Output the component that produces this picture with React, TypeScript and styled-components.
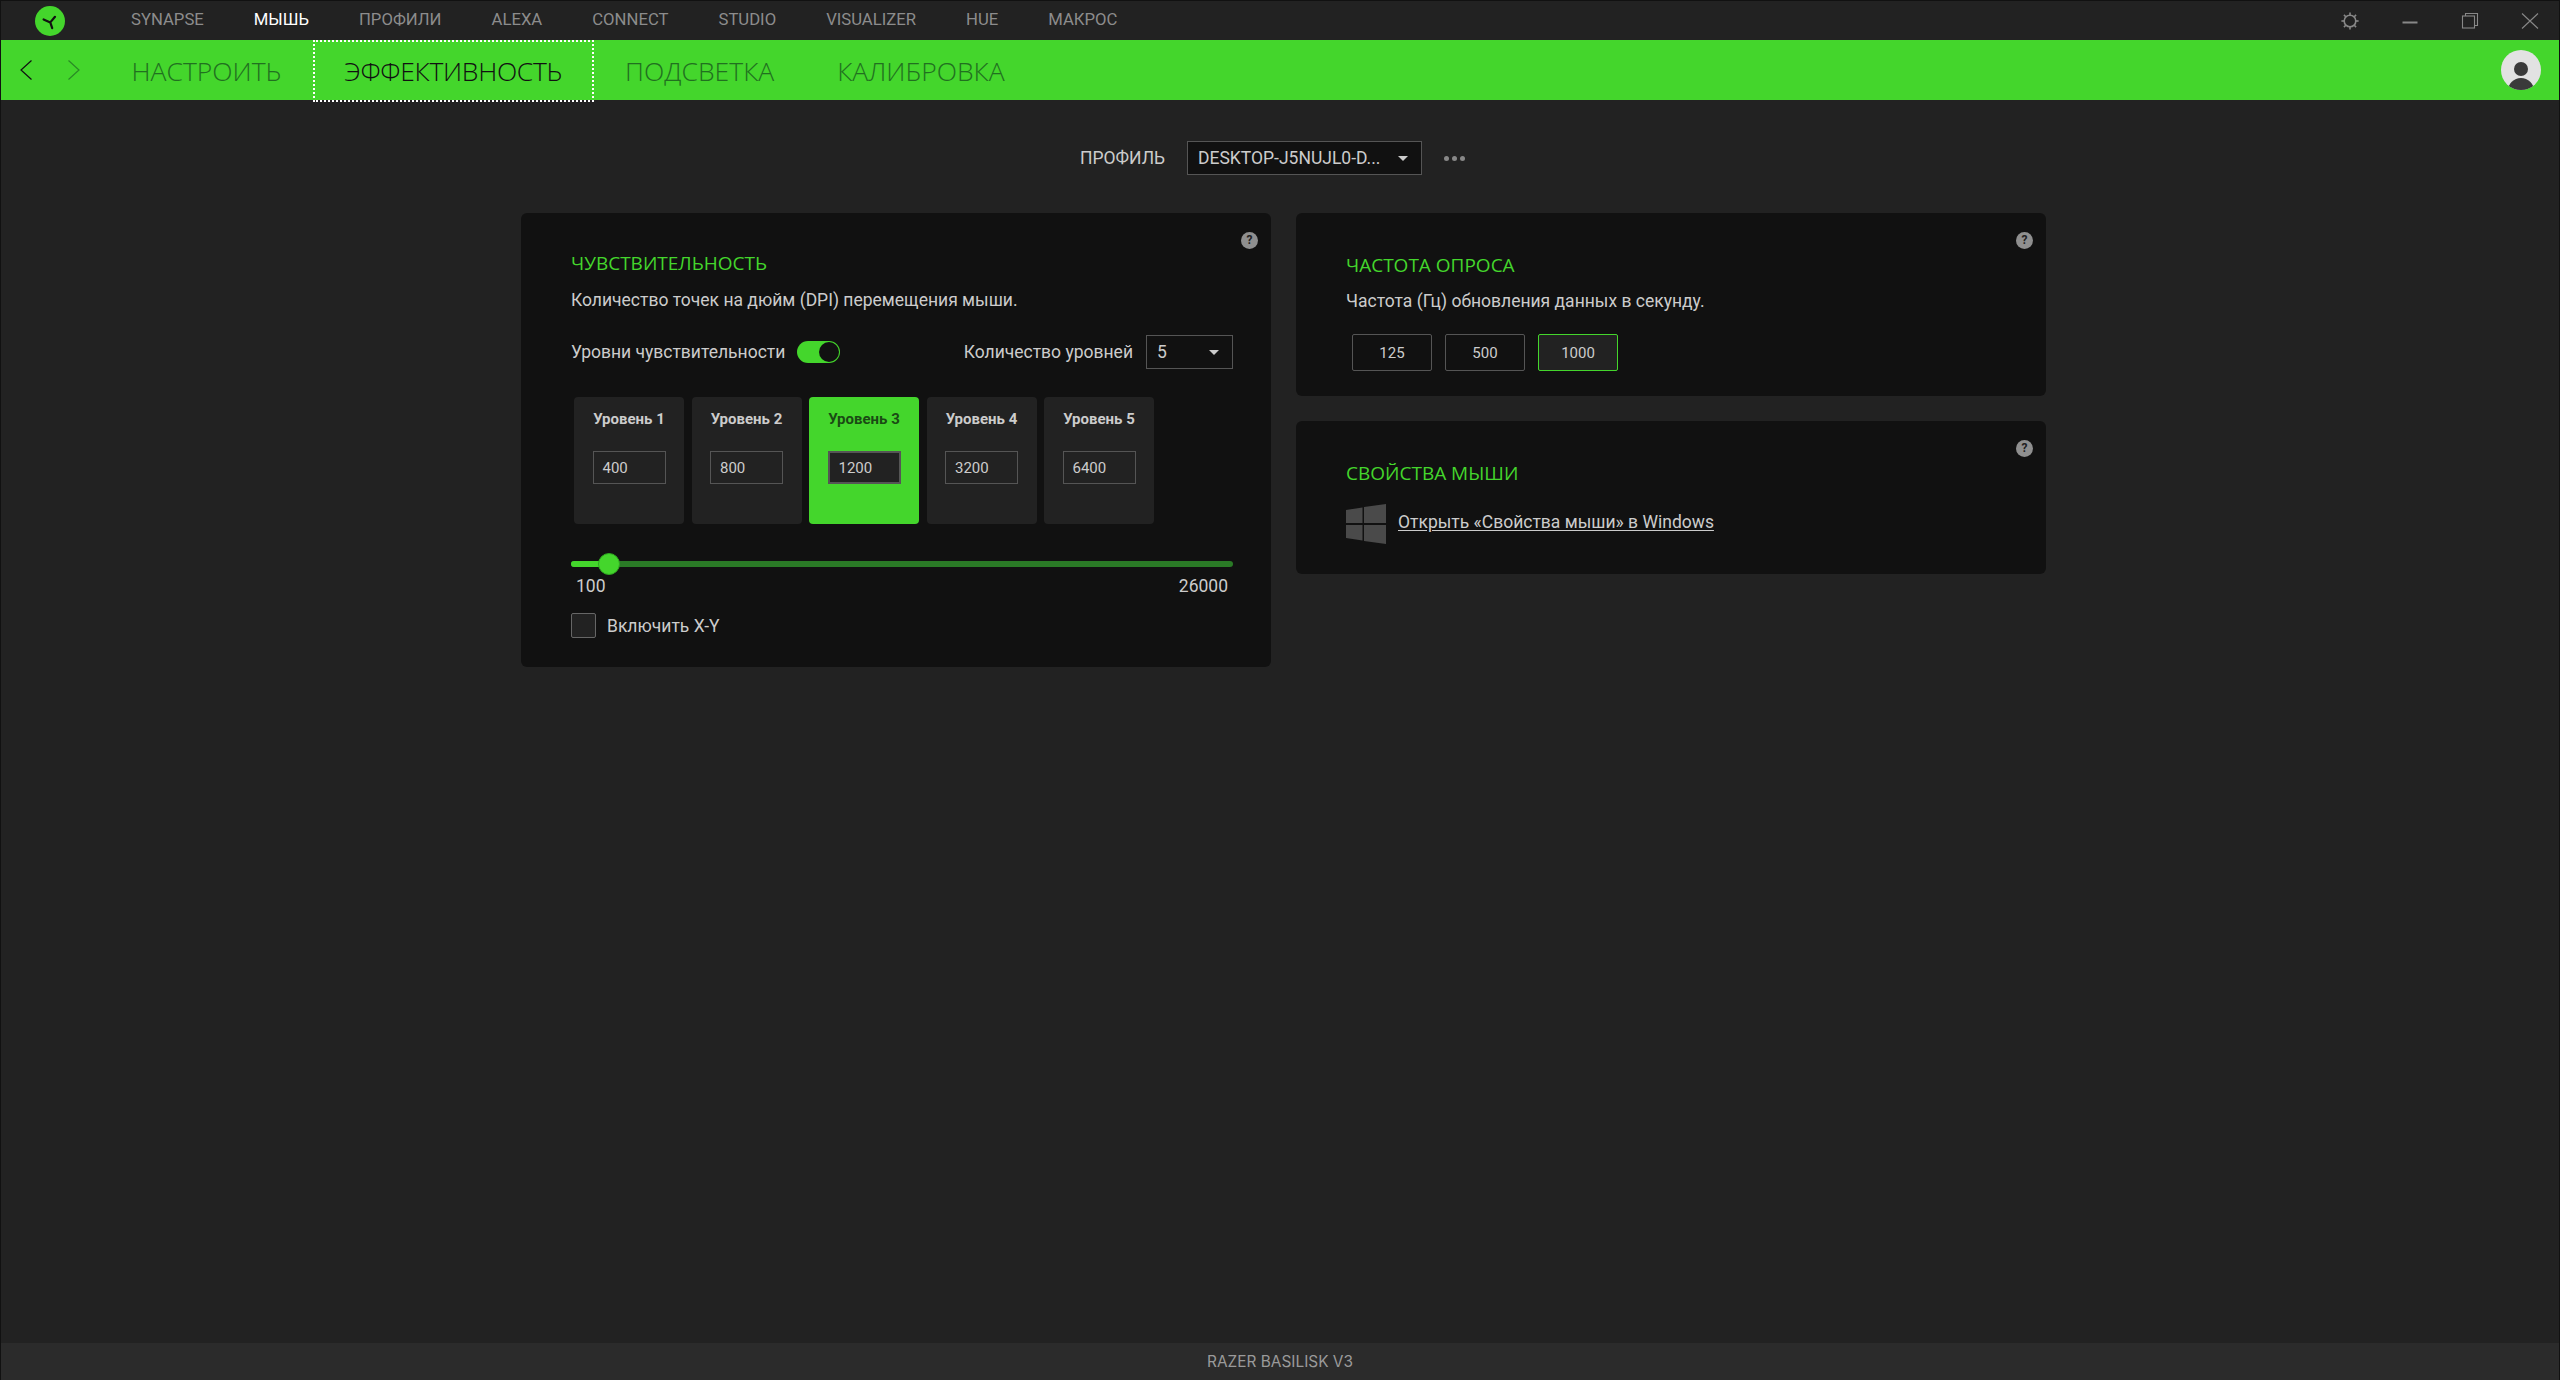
import React from 'react';
import styled, { createGlobalStyle } from 'styled-components';

const GREEN = '#44d62c';

const GlobalStyle = createGlobalStyle`
  html, body {
    margin: 0;
    padding: 0;
    background: #222;
    overflow: hidden;
  }
  * {
    box-sizing: border-box;
  }
`;

const Window = styled.div`
  width: 2560px;
  height: 1380px;
  display: flex;
  flex-direction: column;
  background: #222;
  border: 1px solid #111;
  border-bottom: none;
  font-family: Roboto, "Liberation Sans", sans-serif;
  color: #ccc;
`;

const TopBar = styled.div`
  height: 39px;
  flex: none;
  display: flex;
  align-items: center;
  padding-left: 34px;
`;

const Logo = styled.svg`
  width: 30px;
  height: 30px;
  flex: none;
`;

const TopNav = styled.nav`
  display: flex;
  gap: 50px;
  margin-left: 66px;
  padding-bottom: 1px;
  flex: 1;
`;

const TopNavItem = styled.span<{ $active?: boolean }>`
  font-size: 16.7px;
  line-height: 20px;
  color: ${(p) => (p.$active ? '#fff' : '#8c8c8c')};
`;

const WindowControls = styled.div`
  display: flex;
  align-items: center;
  gap: 40px;
  padding-right: 19px;
`;

const ControlIcon = styled.svg`
  width: 20px;
  height: 20px;
  display: block;
`;

const TabBar = styled.div`
  height: 60px;
  flex: none;
  display: flex;
  align-items: center;
  background: ${GREEN};
  padding-left: 19px;
  padding-right: 18px;
`;

const ChevronGroup = styled.div`
  display: flex;
  gap: 36px;
  margin-right: 20px;
`;

const Chevron = styled.svg`
  width: 12px;
  height: 20px;
  display: block;
`;

const Tabs = styled.div`
  display: flex;
  flex: 1;
  height: 100%;
`;

const Tab = styled.div<{ $active?: boolean }>`
  position: relative;
  display: flex;
  align-items: center;
  padding: 2px 31.5px 0;
  font-family: "Open Sans", "Liberation Sans", sans-serif;
  font-weight: 300;
  font-size: 26.5px;
  letter-spacing: ${(p) => (p.$active ? '-0.3px' : '0')};
  color: ${(p) => (p.$active ? '#111' : '#217020')};

  ${(p) =>
    p.$active &&
    `
    &::after {
      content: '';
      position: absolute;
      inset: 0 0 -2px 0;
      border: 2px dotted #fff;
    }
  `}
`;

const Avatar = styled.svg`
  width: 40px;
  height: 40px;
  display: block;
`;

const Main = styled.main`
  flex: 1;
  padding: 41px 0 0 520px;
`;

const ProfileRow = styled.div`
  display: flex;
  align-items: center;
  height: 34px;
  padding-left: 559px;
`;

const ProfileLabel = styled.span`
  width: 107px;
  font-size: 17.5px;
  color: #ccc;
`;

const Select = styled.div<{ $width: number }>`
  width: ${(p) => p.$width}px;
  height: 34px;
  display: flex;
  align-items: center;
  justify-content: space-between;
  padding: 0 13px 0 10px;
  background: #111;
  border: 1px solid #555;
  font-size: 17.5px;
  color: #ccc;
`;

const Caret = styled.span`
  width: 0;
  height: 0;
  border-left: 5px solid transparent;
  border-right: 5px solid transparent;
  border-top: 5px solid #ccc;
`;

const MoreDots = styled.div`
  display: flex;
  gap: 3px;
  margin-left: 22px;
`;

const Dot = styled.span`
  width: 5px;
  height: 5px;
  border-radius: 50%;
  background: #888;
`;

const Columns = styled.div`
  display: grid;
  grid-template-columns: 750px 750px;
  gap: 25px;
  align-items: start;
  margin-top: 38px;
`;

const Column = styled.div`
  display: flex;
  flex-direction: column;
  gap: 25px;
`;

const Card = styled.section`
  position: relative;
  background: #111;
  border-radius: 6px;
`;

const SensitivityCard = styled(Card)`
  padding: 38px 38px 29px 50px;
`;

const PollingCard = styled(Card)`
  padding: 40px 38px 25px 50px;
`;

const PropertiesCard = styled(Card)`
  padding: 40px 38px 30px 50px;
`;

const HelpBadge = styled.span<{ $top: number }>`
  position: absolute;
  top: ${(p) => p.$top}px;
  right: 13px;
  width: 17px;
  height: 17px;
  border-radius: 50%;
  background: #8f8f8f;
  color: #222;
  font-size: 12px;
  font-weight: 700;
  line-height: 17px;
  text-align: center;
`;

const CardTitle = styled.h2`
  margin: 0;
  font-family: "Open Sans", "Liberation Sans", sans-serif;
  font-weight: 400;
  font-size: 19px;
  line-height: 24px;
  color: ${GREEN};
`;

const Description = styled.p<{ $top: number }>`
  margin: ${(p) => p.$top}px 0 0;
  font-size: 17.5px;
  line-height: 24px;
  color: #ccc;
`;

const ToggleRow = styled.div`
  display: flex;
  align-items: center;
  height: 34px;
  margin-top: 23px;
  font-size: 17.5px;
`;

const Toggle = styled.span`
  position: relative;
  width: 43px;
  height: 22px;
  margin-left: 12px;
  border-radius: 11px;
  background: ${GREEN};
`;

const ToggleKnob = styled.span`
  position: absolute;
  top: 1px;
  right: 1px;
  width: 20px;
  height: 20px;
  border-radius: 50%;
  background: #111;
`;

const LevelsLabel = styled.span`
  margin-left: auto;
  margin-right: 13px;
`;

const Levels = styled.div`
  display: flex;
  gap: 7.5px;
  margin-top: 28px;
  padding-left: 3px;
`;

const Level = styled.div<{ $active?: boolean }>`
  width: 110px;
  height: 127px;
  padding-top: 12px;
  display: flex;
  flex-direction: column;
  align-items: center;
  border-radius: 4px;
  background: ${(p) => (p.$active ? GREEN : '#222')};
`;

const LevelName = styled.span<{ $active?: boolean }>`
  font-size: 15px;
  font-weight: 700;
  line-height: 20px;
  color: ${(p) => (p.$active ? '#1a4a14' : '#ccc')};
`;

const LevelInput = styled.div<{ $active?: boolean }>`
  width: 73px;
  height: 33px;
  margin-top: 22px;
  padding-left: 9px;
  display: flex;
  align-items: center;
  background: #222;
  border: ${(p) => (p.$active ? '2px' : '1px')} solid #555;
  font-size: 15px;
  color: #ccc;
`;

const Slider = styled.div`
  position: relative;
  height: 6px;
  margin-top: 37px;
  border-radius: 3px;
  background: #2a7a26;
`;

const SliderFill = styled.div`
  height: 100%;
  border-radius: 3px;
  background: ${GREEN};
`;

const SliderKnob = styled.span`
  position: absolute;
  top: -8px;
  width: 22px;
  height: 22px;
  margin-left: -11px;
  border-radius: 50%;
  background: ${GREEN};
  border: 1px solid #2ea520;
`;

const SliderScale = styled.div`
  display: flex;
  justify-content: space-between;
  padding: 0 5px;
  margin-top: 9px;
  font-size: 17.5px;
  line-height: 20px;
  color: #ccc;
`;

const CheckRow = styled.label`
  display: flex;
  align-items: center;
  gap: 11px;
  margin-top: 17px;
  font-size: 17.5px;
  color: #ccc;
`;

const CheckBox = styled.span`
  width: 25px;
  height: 25px;
  border-radius: 2px;
  background: #222;
  border: 1px solid #666;
`;

const RateButtons = styled.div`
  display: flex;
  gap: 13px;
  margin-top: 21px;
  padding-left: 6px;
`;

const RateButton = styled.div<{ $active?: boolean }>`
  width: 80px;
  height: 37px;
  display: flex;
  align-items: center;
  justify-content: center;
  border-radius: 2px;
  border: 1px solid ${(p) => (p.$active ? GREEN : '#555')};
  background: ${(p) => (p.$active ? '#222' : 'transparent')};
  font-size: 15px;
  color: #ccc;
`;

const PropertiesRow = styled.div`
  display: flex;
  align-items: center;
  gap: 12px;
  margin-top: 19px;
`;

const WindowsLogo = styled.svg`
  width: 40px;
  height: 40px;
  flex: none;
`;

const PropertiesLink = styled.a`
  padding-bottom: 4px;
  font-size: 17.5px;
  line-height: 20px;
  color: #ccc;
  text-decoration: underline;
  text-underline-offset: 2px;
`;

const StatusBar = styled.footer`
  height: 37px;
  flex: none;
  display: flex;
  align-items: center;
  justify-content: center;
  background: #2b2b2b;
  font-family: Inter, "Liberation Sans", sans-serif;
  font-size: 15.4px;
  color: #9a9a9a;
`;

const navItems = ['SYNAPSE', 'МЫШЬ', 'ПРОФИЛИ', 'ALEXA', 'CONNECT', 'STUDIO', 'VISUALIZER', 'HUE', 'МАКРОС'];
const tabs = ['НАСТРОИТЬ', 'ЭФФЕКТИВНОСТЬ', 'ПОДСВЕТКА', 'КАЛИБРОВКА'];
const levels = [400, 800, 1200, 3200, 6400];
const rates = [125, 500, 1000];

const gearTicks = [0, 45, 90, 135, 180, 225, 270, 315];

const App: React.FC = () => {
  return (
    <Window>
      <GlobalStyle />
      <TopBar>
        <Logo viewBox="0 0 30 30">
          <circle cx="15" cy="15" r="15" fill={GREEN} />
          <path
            d="M15.3 16.4 L20 10.8 M15.3 16.4 L8.6 13.4 M15.3 16.4 L17.2 22.2"
            stroke="#111"
            strokeWidth="2.2"
            strokeLinecap="round"
            fill="none"
          />
        </Logo>
        <TopNav>
          {navItems.map((item) => (
            <TopNavItem key={item} $active={item === 'МЫШЬ'}>
              {item}
            </TopNavItem>
          ))}
        </TopNav>
        <WindowControls>
          <ControlIcon viewBox="0 0 20 20" fill="none" stroke="#888">
            <circle cx="10" cy="10" r="5.8" strokeWidth="1.6" />
            {gearTicks.map((deg) => (
              <line key={deg} x1="10" y1="1.4" x2="10" y2="4" strokeWidth="1.6" transform={`rotate(${deg} 10 10)`} />
            ))}
          </ControlIcon>
          <ControlIcon viewBox="0 0 20 20" fill="none" stroke="#888">
            <line x1="2.5" y1="11.5" x2="17.5" y2="11.5" strokeWidth="2" />
          </ControlIcon>
          <ControlIcon viewBox="0 0 20 20" fill="none" stroke="#888" strokeWidth="1.1">
            <rect x="2.5" y="5" width="12" height="12" />
            <path d="M5.5 5 V2.5 H17.5 V14.5 H14.5" />
          </ControlIcon>
          <ControlIcon viewBox="0 0 20 20" fill="none" stroke="#888" strokeWidth="1.1">
            <path d="M2 2.5 L18 17.5 M18 2.5 L2 17.5" />
          </ControlIcon>
        </WindowControls>
      </TopBar>

      <TabBar>
        <ChevronGroup>
          <Chevron viewBox="0 0 12 20" fill="none" stroke="#111" strokeWidth="1.2">
            <path d="M11.5 0.5 L1 10 L11.5 19.5" />
          </Chevron>
          <Chevron viewBox="0 0 12 20" fill="none" stroke="#2a8a26" strokeWidth="1.2">
            <path d="M0.5 0.5 L11 10 L0.5 19.5" />
          </Chevron>
        </ChevronGroup>
        <Tabs>
          {tabs.map((tab) => (
            <Tab key={tab} $active={tab === 'ЭФФЕКТИВНОСТЬ'}>
              {tab}
            </Tab>
          ))}
        </Tabs>
        <Avatar viewBox="0 0 40 40">
          <defs>
            <clipPath id="avatar-clip">
              <circle cx="20" cy="20" r="20" />
            </clipPath>
          </defs>
          <circle cx="20" cy="20" r="20" fill="#e2e2e2" />
          <circle cx="20" cy="19" r="7" fill="#3a3a3a" />
          <g clipPath="url(#avatar-clip)">
            <circle cx="20" cy="41" r="13" fill="#3a3a3a" />
          </g>
        </Avatar>
      </TabBar>

      <Main>
        <ProfileRow>
          <ProfileLabel>ПРОФИЛЬ</ProfileLabel>
          <Select $width={235}>
            DESKTOP-J5NUJL0-D...
            <Caret />
          </Select>
          <MoreDots>
            <Dot />
            <Dot />
            <Dot />
          </MoreDots>
        </ProfileRow>

        <Columns>
          <Column>
            <SensitivityCard>
              <HelpBadge $top={19}>?</HelpBadge>
              <CardTitle>ЧУВСТВИТЕЛЬНОСТЬ</CardTitle>
              <Description $top={13}>Количество точек на дюйм (DPI) перемещения мыши.</Description>
              <ToggleRow>
                Уровни чувствительности
                <Toggle>
                  <ToggleKnob />
                </Toggle>
                <LevelsLabel>Количество уровней</LevelsLabel>
                <Select $width={87}>
                  5
                  <Caret />
                </Select>
              </ToggleRow>
              <Levels>
                {levels.map((value, i) => (
                  <Level key={value} $active={i === 2}>
                    <LevelName $active={i === 2}>Уровень {i + 1}</LevelName>
                    <LevelInput $active={i === 2}>{value}</LevelInput>
                  </Level>
                ))}
              </Levels>
              <Slider>
                <SliderFill style={{ width: '5.8%' }} />
                <SliderKnob style={{ left: '5.8%' }} />
              </Slider>
              <SliderScale>
                <span>100</span>
                <span>26000</span>
              </SliderScale>
              <CheckRow>
                <CheckBox />
                Включить X-Y
              </CheckRow>
            </SensitivityCard>
          </Column>

          <Column>
            <PollingCard>
              <HelpBadge $top={19}>?</HelpBadge>
              <CardTitle>ЧАСТОТА ОПРОСА</CardTitle>
              <Description $top={12}>Частота (Гц) обновления данных в секунду.</Description>
              <RateButtons>
                {rates.map((rate) => (
                  <RateButton key={rate} $active={rate === 1000}>
                    {rate}
                  </RateButton>
                ))}
              </RateButtons>
            </PollingCard>
            <PropertiesCard>
              <HelpBadge $top={19}>?</HelpBadge>
              <CardTitle>СВОЙСТВА МЫШИ</CardTitle>
              <PropertiesRow>
                <WindowsLogo viewBox="0 0 40 40" fill="#4a4a4a">
                  <path d="M0 6 L16.5 3.4 V19 H0 Z" />
                  <path d="M18 3.1 L40 0 V19 H18 Z" />
                  <path d="M0 21 H16.5 V36.6 L0 34 Z" />
                  <path d="M18 21 H40 V40 L18 36.9 Z" />
                </WindowsLogo>
                <PropertiesLink>Открыть «Свойства мыши» в Windows</PropertiesLink>
              </PropertiesRow>
            </PropertiesCard>
          </Column>
        </Columns>
      </Main>

      <StatusBar>RAZER BASILISK V3</StatusBar>
    </Window>
  );
};

export default App;
